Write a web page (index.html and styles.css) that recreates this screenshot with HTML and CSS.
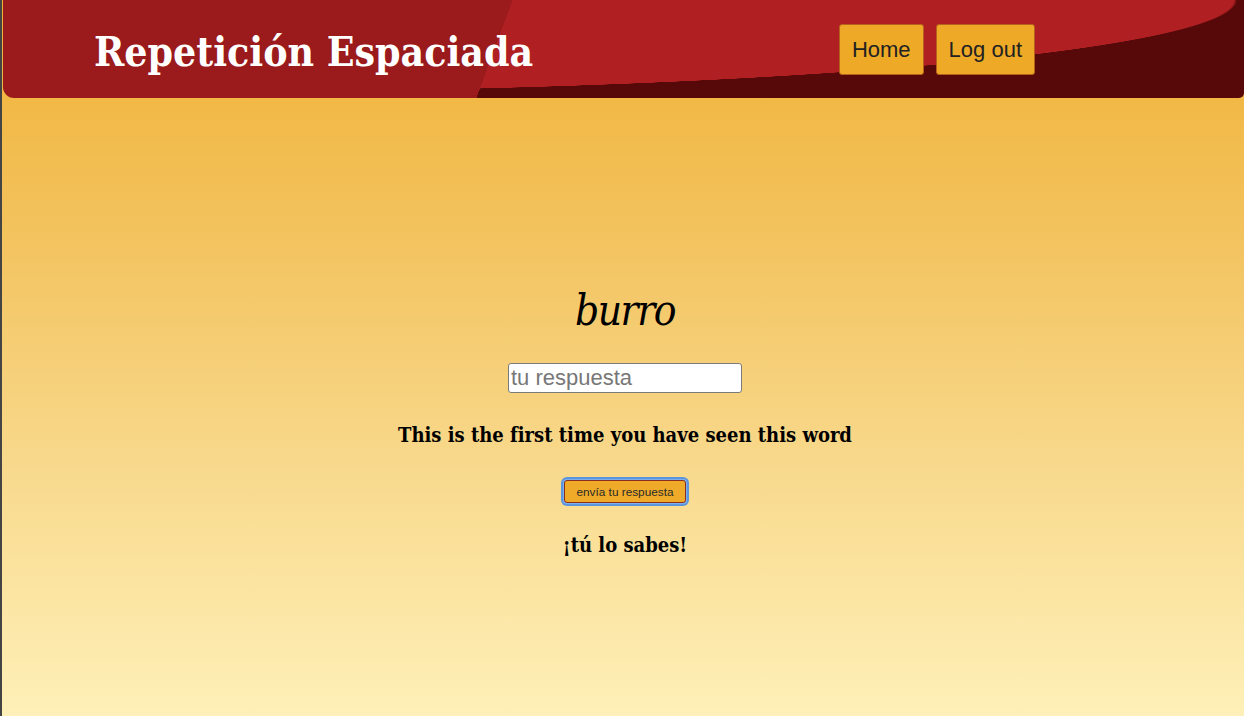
FILE: index.html
```html
<!DOCTYPE html>
<html lang="es">
<head>
<meta charset="utf-8">
<title>Repetición Espaciada</title>
<link rel="stylesheet" href="styles.css">
</head>
<body>
<header class="site-header">
  <h1 class="brand">Repetición Espaciada</h1>
  <nav class="nav">
    <button class="nav-btn" type="button">Home</button>
    <button class="nav-btn" type="button">Log out</button>
  </nav>
</header>
<main class="quiz">
  <h2 class="word">burro</h2>
  <input class="answer" type="text" placeholder="tu respuesta">
  <p class="status">This is the first time you have seen this word</p>
  <button class="submit" type="button">envía tu respuesta</button>
  <p class="hint">¡tú lo sabes!</p>
</main>
</body>
</html>
```
FILE: styles.css
```css
html, body {
  margin: 0;
  padding: 0;
}
body {
  min-height: 100vh;
  box-sizing: border-box;
  border-left: 2px solid #444;
  background: linear-gradient(180deg, #f0b134 0%, #f3c461 35%, #f8d98c 65%, #fef0b8 100%);
  font-family: "DejaVu Serif Condensed", "DejaVu Serif", serif;
  overflow: hidden;
}
.site-header {
  margin-left: 1px;
  height: 98px;
  box-sizing: border-box;
  display: flex;
  align-items: center;
  justify-content: space-between;
  padding: 0 209px 0 91px;
  border-radius: 0 0 5px 11px;
  background:
    linear-gradient(110.3deg, #9b1a1b 478px, transparent 478px),
    radial-gradient(1037px 92px at 197px 0, #b01f22 99.7%, transparent 100%),
    #570909;
}
.brand {
  margin: 0;
  color: #fff;
  font-size: 40.6px;
  font-weight: bold;
  line-height: 1;
  padding-top: 6px;
}
.nav {
  display: flex;
  gap: 12px;
  padding-top: 1px;
}
.nav-btn {
  font-family: "Liberation Sans", Arial, sans-serif;
  font-size: 22px;
  color: #222;
  background: #eeaa26;
  border: 1px solid #b7621c;
  border-radius: 3px;
  padding: 0 12px;
  height: 51px;
  line-height: 25px;
}
.quiz {
  display: flex;
  flex-direction: column;
  align-items: center;
  padding-top: 186px;
  padding-left: 4px;
}
.word {
  margin: 0;
  font-size: 42px;
  letter-spacing: -1.5px;
  font-weight: normal;
  font-style: italic;
  line-height: 54px;
}
.answer {
  margin-top: 25px;
  width: 234px;
  height: 30px;
  box-sizing: border-box;
  border: 1px solid #7a7a7a;
  border-radius: 3px;
  background: #fff;
  padding: 0 2px;
  font-family: "Liberation Sans", Arial, sans-serif;
  font-size: 22px;
}
.answer::placeholder {
  color: #777;
}
.status {
  margin: 29px 0 0;
  font-size: 20px;
  font-weight: bold;
  line-height: 26px;
}
.submit {
  margin-top: 32px;
  font-family: "Liberation Sans", Arial, sans-serif;
  font-size: 11.8px;
  color: #2a2a2a;
  background: #eeaa28;
  border: 1px solid #8a2d1c;
  border-radius: 3px;
  width: 122px;
  height: 23px;
  padding: 0;
  box-shadow: 0 0 0 1px #7fb0ee, 0 0 0 3px #5b95dd;
}
.hint {
  margin: 29px 0 0;
  font-size: 20px;
  font-weight: bold;
  line-height: 26px;
}
```
